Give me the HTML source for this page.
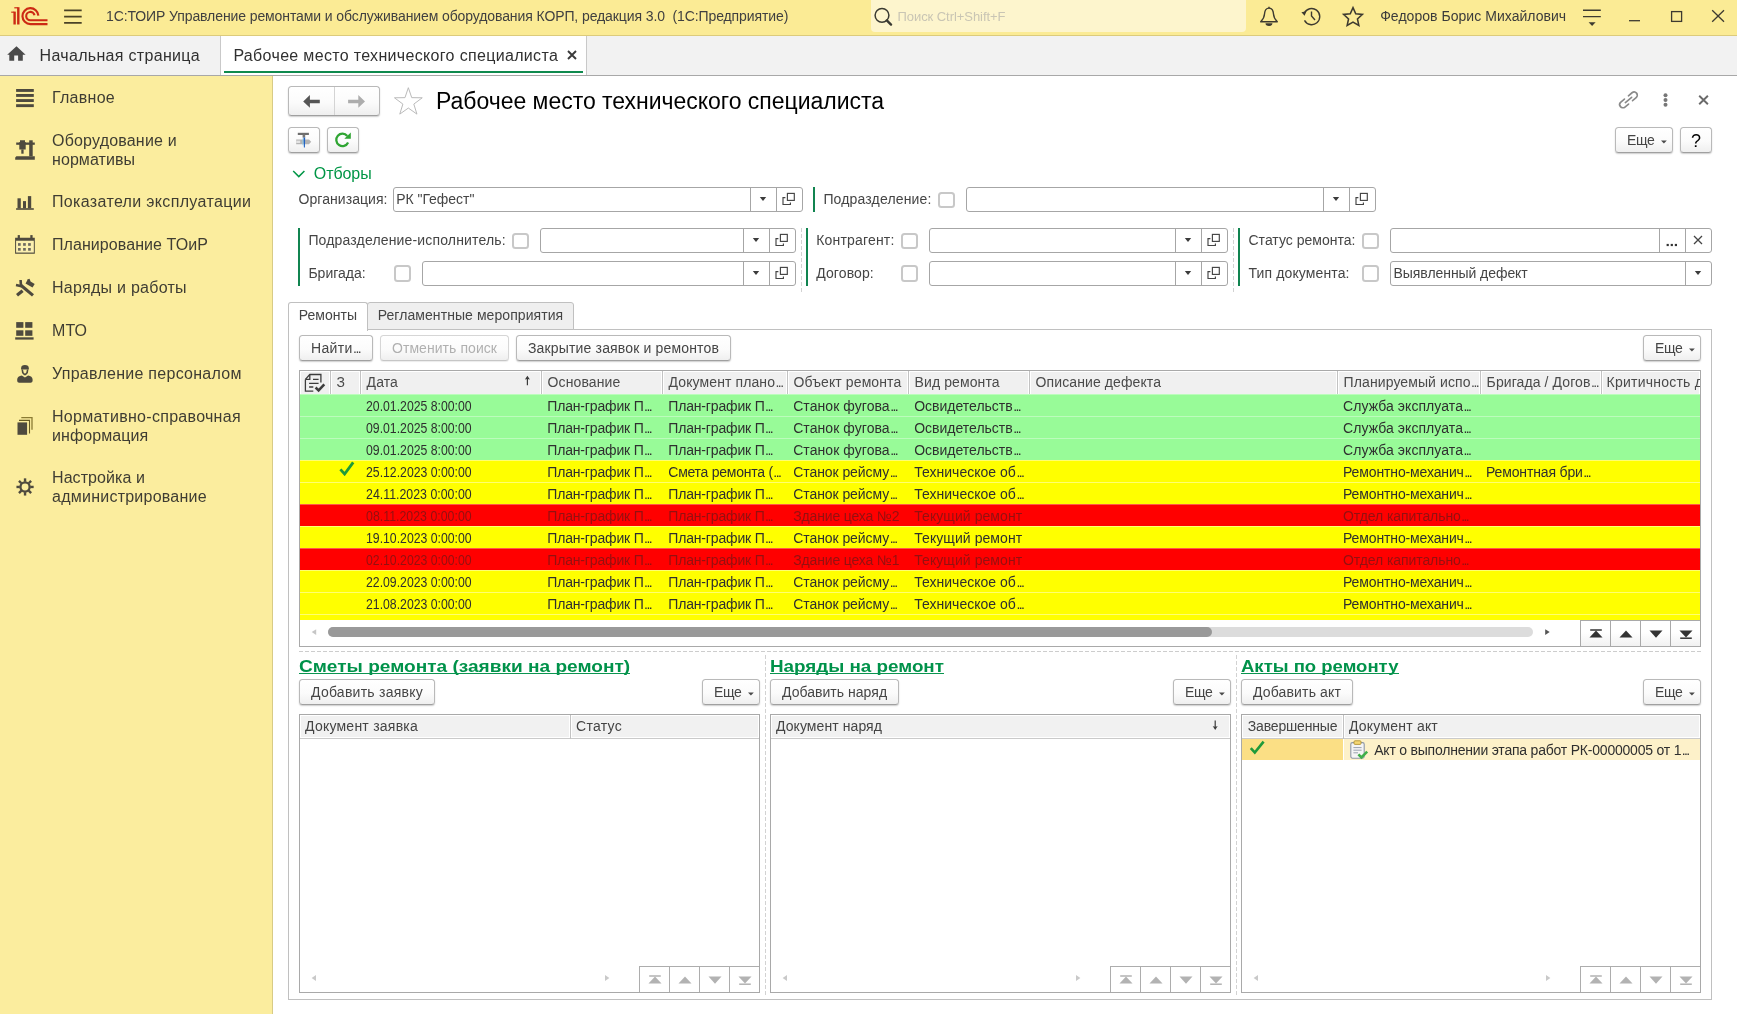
<!DOCTYPE html>
<html lang="ru"><head><meta charset="utf-8"><title>1С:ТОИР — Рабочее место технического специалиста</title>
<style>
html,body{margin:0;padding:0;background:#fff;}
body{width:1737px;height:1014px;overflow:hidden;font-family:"Liberation Sans",sans-serif;font-size:14px;color:#333;}
#app{will-change:transform;position:relative;width:1737px;height:1014px;overflow:hidden;background:#fff;}
#app div,#app span.t,#app svg{position:absolute;box-sizing:border-box;}
.t{white-space:nowrap;color:#454545;}
.el{letter-spacing:-1.6px;margin-left:0.5px;}
.btn{border:1px solid #b9b9b9;border-bottom-color:#a0a0a0;border-radius:3.5px;background:linear-gradient(#ffffff 0%,#fbfbfb 55%,#efefef 100%);box-shadow:0 1px 1.5px rgba(0,0,0,.2);}
.btn.dis{border-color:#d6d6d6;border-bottom-color:#c6c6c6;box-shadow:0 1px 1px rgba(0,0,0,.08);}
.inp{border:1px solid #a6a6a6;border-radius:3px;background:#fff;}
.sep{background:#a6a6a6;width:1px;}
.cb{border:2px solid #c8c8c8;border-radius:3.5px;background:#fff;}
.gbar{background:#118450;width:2px;}
.th{background:#f2f2f2;}
.grid{border:1px solid #a9a9a9;background:#fff;}

</style></head>
<body>
<div id="app">
<!-- top bar -->
<div style="left:0px;top:0px;width:1737px;height:36px;background:#fbeb95;border-bottom:1px solid #dccb7c;"></div>
<svg style="left:8px;top:4px;" width="80" height="26" viewBox="8 4 80 26"><g fill="#cc2a14"><rect x="13.4" y="11.6" width="2.4" height="12.9"/><rect x="11.2" y="11.6" width="3" height="1.15"/><rect x="17.1" y="7.2" width="2.4" height="17.3"/><rect x="14.3" y="7.2" width="3.5" height="1.2"/></g>
<g fill="none" stroke="#cc2a14"><path d="M38.35 15.6A7.95 7.95 0 1 0 30.4 24.05H47.5" stroke-width="2.2"/><path d="M34.5 15.2A4.2 4.2 0 1 0 30.4 20.3H47.5" stroke-width="2.1"/></g>
<g stroke="#4a4226" stroke-width="1.6"><path d="M64.1 10.4H81.7M64.1 16.6H81.7M64.1 22.9H81.7"/></g></svg>
<span class="t" style="left:106.0px;top:7.3px;font-size:14px;line-height:18px;letter-spacing:-0.10px;color:#404040;white-space:pre;">1С:ТОИР Управление ремонтами и обслуживанием оборудования КОРП, редакция 3.0  (1С:Предприятие)</span>
<div style="left:871px;top:0px;width:375px;height:32px;background:#fdf5cd;border-radius:0 0 4px 4px;"></div>
<svg style="left:873px;top:6px;" width="20" height="20" viewBox="0 0 20 20"><circle cx="9" cy="9.3" r="6.9" fill="none" stroke="#3a3a32" stroke-width="1.5"/><path d="M13.8 14.4L18 18.6" stroke="#3a3a32" stroke-width="2.4" stroke-linecap="round"/></svg>
<span class="t" style="left:897.5px;top:7.5px;font-size:13px;line-height:17px;letter-spacing:-0.06px;color:#c9c5b4;">Поиск Ctrl+Shift+F</span>
<svg style="left:1257px;top:4px;" width="24" height="26" viewBox="1257 4 24 26"><path d="M1269 8.1C1265.7 8.1 1264.7 11 1264.5 14C1264.3 17.4 1263.2 19.4 1260.7 21.7H1277.3C1274.8 19.4 1273.7 17.4 1273.5 14C1273.3 11 1272.3 8.1 1269 8.1z" fill="none" stroke="#3d3a30" stroke-width="1.4" stroke-linejoin="round"/><path d="M1269 6.8V8.4" stroke="#3d3a30" stroke-width="1.4"/><path d="M1265.5 23.3H1272.5A3.5 2.7 0 0 1 1265.5 23.3z" fill="#3d3a30"/></svg>
<svg style="left:1299px;top:4px;" width="26" height="26" viewBox="1299 4 26 26"><path d="M1304.3 13.2A8.1 8.1 0 1 1 1304.5 20.4" fill="none" stroke="#3d3a30" stroke-width="1.4"/><path d="M1301.4 12.2L1306.5 11.2L1304.6 15.8z" fill="#3d3a30"/><path d="M1311.5 11.6V16L1315 20" fill="none" stroke="#3d3a30" stroke-width="1.4"/></svg>
<svg style="left:1341px;top:5px;" width="24" height="24" viewBox="0 0 24 24"><path d="M12 2.6l2.75 6.1 6.65.7-4.95 4.5 1.4 6.55L12 17.1l-5.85 3.35 1.4-6.55L2.6 9.4l6.65-.7z" fill="none" stroke="#3d3a30" stroke-width="1.55" stroke-linejoin="miter"/></svg>
<span class="t" style="left:1380.2px;top:6.9px;font-size:14px;line-height:18px;letter-spacing:0.04px;color:#3b3b3b;">Федоров Борис Михайлович</span>
<svg style="left:1580px;top:6px;" width="24" height="22" viewBox="1580 6 24 22"><g stroke="#3d3a30" stroke-width="1.4"><path d="M1583 10.25H1600.8M1583 16.6H1600.8"/></g><path d="M1588.6 22.3H1595.6L1592.1 25.9z" fill="#3d3a30"/></svg>
<svg style="left:1626px;top:8px;" width="18" height="18" viewBox="1626 8 18 18"><path d="M1629 20.7H1640" stroke="#3d3a30" stroke-width="1.3"/></svg>
<svg style="left:1668px;top:8px;" width="18" height="18" viewBox="1668 8 18 18"><rect x="1671.6" y="11.6" width="10" height="9.8" fill="none" stroke="#3d3a30" stroke-width="1.3"/></svg>
<svg style="left:1709px;top:7px;" width="18" height="18" viewBox="1709 7 18 18"><path d="M1712.2 10.2L1724 21.8M1724 10.2L1712.2 21.8" stroke="#3d3a30" stroke-width="1.3"/></svg>
<!-- tab bar -->
<div style="left:0px;top:36px;width:1737px;height:40px;background:#f2f2f2;border-bottom:1px solid #a8a8a8;"></div>
<svg style="left:5px;top:44px;" width="24" height="20" viewBox="5 44 24 20"><path d="M16.5 46.2L25.6 54.8H22.8V60.8H18.1V55.4H14.2V60.8H9.3V54.8H7.2z" fill="#4a4a4a"/></svg>
<span class="t" style="left:39.6px;top:44.8px;font-size:16px;line-height:21px;letter-spacing:0.31px;color:#303030;">Начальная страница</span>
<div style="left:220px;top:36px;width:367px;height:39px;background:#fff;border-left:1px solid #c9c9c9;border-right:1px solid #c9c9c9;"></div>
<span class="t" style="left:233.4px;top:44.8px;font-size:16px;line-height:21px;letter-spacing:0.33px;color:#303030;">Рабочее место технического специалиста</span>
<div style="left:224px;top:71px;width:359px;height:2px;background:#0f8a4e;"></div>
<svg style="left:566px;top:49px;" width="12" height="12" viewBox="0 0 12 12"><path d="M2 2L10 10M10 2L2 10" stroke="#3a3a3a" stroke-width="1.9"/></svg>
<!-- sidebar -->
<div style="left:0px;top:76px;width:273px;height:938px;background:#fbed9e;border-right:1px solid #d8cb86;"></div>
<span class="t" style="left:52.0px;top:87.0px;font-size:16px;line-height:21px;letter-spacing:0.26px;color:#3f3d33;">Главное</span>
<span class="t" style="left:52.0px;top:130.2px;font-size:16px;line-height:21px;letter-spacing:0.19px;color:#3f3d33;">Оборудование и</span>
<span class="t" style="left:52.0px;top:149.2px;font-size:16px;line-height:21px;letter-spacing:0.08px;color:#3f3d33;">нормативы</span>
<span class="t" style="left:52.0px;top:191.1px;font-size:16px;line-height:21px;letter-spacing:0.34px;color:#3f3d33;">Показатели эксплуатации</span>
<span class="t" style="left:52.0px;top:233.9px;font-size:16px;line-height:21px;letter-spacing:0.07px;color:#3f3d33;">Планирование ТОиР</span>
<span class="t" style="left:52.0px;top:277.0px;font-size:16px;line-height:21px;letter-spacing:0.27px;color:#3f3d33;">Наряды и работы</span>
<span class="t" style="left:52.0px;top:319.9px;font-size:16px;line-height:21px;letter-spacing:0.08px;color:#3f3d33;">МТО</span>
<span class="t" style="left:52.0px;top:362.9px;font-size:16px;line-height:21px;letter-spacing:0.27px;color:#3f3d33;">Управление персоналом</span>
<span class="t" style="left:52.0px;top:405.8px;font-size:16px;line-height:21px;letter-spacing:0.29px;color:#3f3d33;">Нормативно-справочная</span>
<span class="t" style="left:52.0px;top:424.8px;font-size:16px;line-height:21px;letter-spacing:0.08px;color:#3f3d33;">информация</span>
<span class="t" style="left:52.0px;top:466.8px;font-size:16px;line-height:21px;letter-spacing:0.08px;color:#3f3d33;">Настройка и</span>
<span class="t" style="left:52.0px;top:485.8px;font-size:16px;line-height:21px;letter-spacing:0.24px;color:#3f3d33;">администрирование</span>
<svg style="left:10px;top:80px;" width="30" height="424" viewBox="10 80 30 424"><g fill="#4e4a3e"><rect x="16.1" y="89" width="17.7" height="2.9"/><rect x="16.1" y="94" width="17.7" height="2.9"/><rect x="16.1" y="99.1" width="17.7" height="2.9"/><rect x="16.1" y="104.2" width="17.7" height="2.9"/></g><g fill="#4e4a3e"><path d="M16.4 156.2H34.8V159.8H15.2V157.4z"/><rect x="29.2" y="140.3" width="3.5" height="16"/><rect x="16.2" y="142.5" width="18.6" height="2.3"/><path d="M20 140.3H25V142H25.7V149.6H19.3V142H20z"/><rect x="21.3" y="149.4" width="2.3" height="4.3"/></g><g fill="#4e4a3e"><rect x="16.1" y="208.2" width="17.7" height="1.6"/><rect x="17.5" y="198.3" width="3.3" height="10"/><rect x="23" y="201.1" width="3" height="7.2"/><rect x="27.9" y="196.1" width="3.3" height="12.2"/></g><g fill="#4e4a3e"><path d="M15.1 237.7H34.8V253.8H15.1z M16.1 240.8V252.6H33.8V240.8z" fill-rule="evenodd"/><rect x="17.7" y="235.1" width="2.2" height="3"/><rect x="30.3" y="235.1" width="2.3" height="3"/><rect x="18" y="243.1" width="2.7" height="2.7"/><rect x="18" y="248" width="2.7" height="2.7"/><rect x="23.1" y="243.1" width="2.7" height="2.7"/><rect x="23.1" y="248" width="2.7" height="2.7"/><rect x="28.1" y="243.1" width="2.7" height="2.7"/><rect x="28.1" y="248" width="2.7" height="2.7"/></g><rect x="16.1" y="240.8" width="17.7" height="11.8" fill="#fff" opacity=".18"/><g fill="none" stroke="#4e4a3e"><path d="M33 295.4L20.6 285" stroke-width="3.1"/><path d="M21.6 286.2L16 285" stroke-width="2.6"/><path d="M21 286L20.6 280" stroke-width="2.6"/><path d="M17 295.2L22.6 290.8" stroke-width="3.3"/><path d="M26.6 281.6L33.6 285.8" stroke-width="4.2"/><path d="M28.4 279.2L29.4 282" stroke-width="2.4"/></g><g fill="#4e4a3e"><rect x="16.2" y="322.1" width="7.2" height="5.7"/><rect x="25.2" y="322.1" width="7.2" height="5.7"/><rect x="16.2" y="330.3" width="7.2" height="5.5"/><rect x="25.2" y="330.3" width="7.2" height="5.5"/><rect x="15.2" y="337.3" width="18.4" height="2.3"/></g><g fill="#4e4a3e"><path d="M21.1 368.2a3.85 3.2 0 0 1 7.7 0v1.4h-7.7z"/><path d="M21.5 369.4h1.5l.6 3.2 1.35 1.2 1.35-1.2.6-3.2h1.5l-.5 3.6-2.1 2.2h-1.7l-2.1-2.2z"/><path d="M17.2 379.4c0-2.2 2-3.6 4.6-4l3.15 2.1 3.15-2.1c2.6.4 4.5 1.8 4.5 4v1.4c0 1.2-.9 2-2 2H19.2c-1.1 0-2-.8-2-2z"/></g><rect x="17.5" y="422.4" width="9.6" height="12.4" fill="#4e4a3e"/><path d="M19 420.4H29.5V433.5" fill="none" stroke="#665a22" stroke-width="1.1"/><path d="M21.3 417.6H32V429.7" fill="none" stroke="#8a7b33" stroke-width="1.3"/><g fill="none" stroke="#4e4a3e"><circle cx="25.05" cy="486.95" r="4.6" stroke-width="2.3"/><g stroke-width="2.4"><path d="M30.25 486.95L33.65 486.95"/><path d="M28.73 490.63L31.13 493.03"/><path d="M25.05 492.15L25.05 495.55"/><path d="M21.37 490.63L18.97 493.03"/><path d="M19.85 486.95L16.45 486.95"/><path d="M21.37 483.27L18.97 480.87"/><path d="M25.05 481.75L25.05 478.35"/><path d="M28.73 483.27L31.13 480.87"/></g></g></svg>
<!-- form header -->
<div class="btn" style="left:288px;top:86px;width:92px;height:30px;"></div>
<div style="left:334px;top:87px;width:1px;height:28px;background:#d4d4d4;"></div>
<svg style="left:300px;top:93px;" width="24" height="17" viewBox="300 93 24 17"><path d="M303.2 101.4L309.9 95.1V99.7H319.8V103.2H309.9V107.7z" fill="#555"/></svg>
<svg style="left:346px;top:93px;" width="24" height="17" viewBox="346 93 24 17"><path d="M365 101.4L358.3 95.1V99.7H348.1V103.2H358.3V107.7z" fill="#adadad"/></svg>
<svg style="left:392px;top:85px;" width="33" height="32" viewBox="392 85 33 32"><path d="M408.35 87.70L411.73 97.65L422.24 97.79L413.82 104.08L416.93 114.11L408.35 108.05L399.77 114.11L402.88 104.08L394.46 97.79L404.97 97.65z" fill="#fff" stroke="#b6b6b6" stroke-width="0.95" stroke-linejoin="miter"/></svg>
<span class="t" style="left:436.0px;top:85.9px;font-size:23px;line-height:30px;letter-spacing:-0.02px;color:#000;">Рабочее место технического специалиста</span>
<svg style="left:1616px;top:88px;" width="26" height="24" viewBox="1616 88 26 24"><g transform="translate(1628.5 99.9) rotate(-40)" fill="none" stroke="#8a8a8a" stroke-width="1.65" stroke-linecap="round"><path d="M-2.6 -3.2H-7.3A3.2 3.2 0 0 0 -7.3 3.2H-2.6"/><path d="M2.6 -3.2H7.3A3.2 3.2 0 0 1 7.3 3.2H2.6"/><path d="M-4.1 0H4.1"/></g></svg>
<svg style="left:1661px;top:91px;" width="10" height="18" viewBox="1661 91 10 18"><g fill="#777"><circle cx="1665.5" cy="95.2" r="2"/><circle cx="1665.5" cy="100" r="2"/><circle cx="1665.5" cy="104.8" r="2"/></g></svg>
<svg style="left:1696px;top:93px;" width="15" height="14" viewBox="1696 93 15 14"><path d="M1699.2 95.7L1707.9 104.2M1707.9 95.7L1699.2 104.2" stroke="#6a6a6a" stroke-width="1.9"/></svg>
<div class="btn" style="left:288px;top:127px;width:32px;height:26px;"></div>
<svg style="left:294px;top:130px;" width="20" height="20" viewBox="294 130 20 20"><rect x="297.8" y="132.8" width="11.1" height="2.2" fill="#6e6e6e"/><rect x="302.6" y="134.6" width="2.6" height="3" fill="#777"/><path d="M296.2 139.4H309L311.2 141.8L309 144.2H296.2z" fill="#b4b4b4"/><rect x="296.2" y="140.6" width="4" height="2.4" fill="#e4e4e4"/><path d="M303.4 137.4L305.2 137.4L304.9 147.6L303.9 147.6z" fill="#1f62c4"/><rect x="302.4" y="138.4" width="1" height="6.8" fill="#8fd0f0" opacity=".8"/></svg>
<div class="btn" style="left:327px;top:127px;width:32px;height:26px;"></div>
<svg style="left:333px;top:130px;" width="20" height="20" viewBox="333 130 20 20"><path d="M347.25 135.9A6.2 6.2 0 1 0 348.1 142.5" fill="none" stroke="#2fa533" stroke-width="2.3"/><path d="M350.8 132.5V138.8H344.3z" fill="#2fa533"/></svg>
<div class="btn" style="left:1615px;top:127px;width:58px;height:26px;"></div>
<span class="t" style="left:1627.1px;top:131.2px;font-size:14px;line-height:18px;letter-spacing:-0.39px;">Еще</span>
<svg style="left:1659px;top:139px;" width="10" height="6" viewBox="1659 139 10 6"><path d="M1661.0 140.6H1666.8L1663.9 143.4z" fill="#4a4a4a"/></svg>
<div class="btn" style="left:1680px;top:127px;width:32px;height:26px;"></div>
<span class="t" style="left:1691.0px;top:130.1px;font-size:18px;line-height:23px;color:#000;">?</span>
<svg style="left:291px;top:168px;" width="16" height="12" viewBox="0 0 16 12"><path d="M2.2 3L7.8 8.6L13.4 3" fill="none" stroke="#009646" stroke-width="1.5"/></svg>
<span class="t" style="left:313.8px;top:162.7px;font-size:16px;line-height:21px;letter-spacing:-0.08px;color:#009646;">Отборы</span>
<!-- filters -->
<span class="t" style="left:298.5px;top:189.9px;font-size:14px;line-height:18px;letter-spacing:0.06px;">Организация:</span>
<div class="inp" style="left:393px;top:187px;width:410px;height:24.5px;"></div>
<div class="sep" style="left:750px;top:188px;width:1px;height:22.5px;"></div>
<div class="sep" style="left:776px;top:188px;width:1px;height:22.5px;"></div>
<svg style="left:758px;top:196px;" width="10" height="7" viewBox="0 0 10 7"><path d="M1.8 1.1H8.2L5 4.9z" fill="#3c3c3c"/></svg>
<svg style="left:782px;top:191px;" width="14" height="14" viewBox="0 0 14 14"><g fill="none" stroke="#444" stroke-width="1.15"><rect x="5.4" y="2.4" width="6.9" height="7"/><path d="M3.4 6.6H1V13.5H8.4V11.4"/></g></svg>
<span class="t" style="left:396.3px;top:189.9px;font-size:14px;line-height:18px;letter-spacing:-0.04px;">РК "Гефест"</span>
<div class="gbar" style="left:813px;top:187px;width:2px;height:24.5px;"></div>
<span class="t" style="left:823.4px;top:189.9px;font-size:14px;line-height:18px;letter-spacing:0.16px;">Подразделение:</span>
<div class="cb" style="left:938px;top:191.5px;width:16.5px;height:16.5px;"></div>
<div class="inp" style="left:966px;top:187px;width:409.5px;height:24.5px;"></div>
<div class="sep" style="left:1323px;top:188px;width:1px;height:22.5px;"></div>
<div class="sep" style="left:1349px;top:188px;width:1px;height:22.5px;"></div>
<svg style="left:1331px;top:196px;" width="10" height="7" viewBox="0 0 10 7"><path d="M1.8 1.1H8.2L5 4.9z" fill="#3c3c3c"/></svg>
<svg style="left:1355px;top:191px;" width="14" height="14" viewBox="0 0 14 14"><g fill="none" stroke="#444" stroke-width="1.15"><rect x="5.4" y="2.4" width="6.9" height="7"/><path d="M3.4 6.6H1V13.5H8.4V11.4"/></g></svg>
<div class="gbar" style="left:298px;top:228px;width:2px;height:58px;"></div>
<span class="t" style="left:308.4px;top:231.1px;font-size:14px;line-height:18px;letter-spacing:0.16px;">Подразделение-исполнитель:</span>
<div class="cb" style="left:512px;top:232.5px;width:16.5px;height:16.5px;"></div>
<div class="inp" style="left:540px;top:228px;width:255.5px;height:24.5px;"></div>
<div class="sep" style="left:743px;top:229px;width:1px;height:22.5px;"></div>
<div class="sep" style="left:769px;top:229px;width:1px;height:22.5px;"></div>
<svg style="left:751px;top:237px;" width="10" height="7" viewBox="0 0 10 7"><path d="M1.8 1.1H8.2L5 4.9z" fill="#3c3c3c"/></svg>
<svg style="left:775px;top:232px;" width="14" height="14" viewBox="0 0 14 14"><g fill="none" stroke="#444" stroke-width="1.15"><rect x="5.4" y="2.4" width="6.9" height="7"/><path d="M3.4 6.6H1V13.5H8.4V11.4"/></g></svg>
<span class="t" style="left:308.4px;top:263.9px;font-size:14px;line-height:18px;letter-spacing:0.02px;">Бригада:</span>
<div class="cb" style="left:394px;top:265px;width:16.5px;height:16.5px;"></div>
<div class="inp" style="left:422px;top:261px;width:373.5px;height:24.5px;"></div>
<div class="sep" style="left:743px;top:262px;width:1px;height:22.5px;"></div>
<div class="sep" style="left:769px;top:262px;width:1px;height:22.5px;"></div>
<svg style="left:751px;top:270px;" width="10" height="7" viewBox="0 0 10 7"><path d="M1.8 1.1H8.2L5 4.9z" fill="#3c3c3c"/></svg>
<svg style="left:775px;top:265px;" width="14" height="14" viewBox="0 0 14 14"><g fill="none" stroke="#444" stroke-width="1.15"><rect x="5.4" y="2.4" width="6.9" height="7"/><path d="M3.4 6.6H1V13.5H8.4V11.4"/></g></svg>
<div style="left:801px;top:228px;width:1px;height:64px;background:repeating-linear-gradient(180deg,#d2d2d2 0 4px,transparent 4px 6px);"></div>
<div style="left:1233px;top:228px;width:1px;height:64px;background:repeating-linear-gradient(180deg,#d2d2d2 0 4px,transparent 4px 6px);"></div>
<div class="gbar" style="left:806px;top:228px;width:2px;height:58px;"></div>
<span class="t" style="left:816.2px;top:231.1px;font-size:14px;line-height:18px;letter-spacing:0.19px;">Контрагент:</span>
<div class="cb" style="left:901px;top:232.5px;width:16.5px;height:16.5px;"></div>
<div class="inp" style="left:929px;top:228px;width:298.5px;height:24.5px;"></div>
<div class="sep" style="left:1175px;top:229px;width:1px;height:22.5px;"></div>
<div class="sep" style="left:1201px;top:229px;width:1px;height:22.5px;"></div>
<svg style="left:1183px;top:237px;" width="10" height="7" viewBox="0 0 10 7"><path d="M1.8 1.1H8.2L5 4.9z" fill="#3c3c3c"/></svg>
<svg style="left:1207px;top:232px;" width="14" height="14" viewBox="0 0 14 14"><g fill="none" stroke="#444" stroke-width="1.15"><rect x="5.4" y="2.4" width="6.9" height="7"/><path d="M3.4 6.6H1V13.5H8.4V11.4"/></g></svg>
<span class="t" style="left:816.2px;top:263.9px;font-size:14px;line-height:18px;letter-spacing:0.11px;">Договор:</span>
<div class="cb" style="left:901px;top:265px;width:16.5px;height:16.5px;"></div>
<div class="inp" style="left:929px;top:261px;width:298.5px;height:24.5px;"></div>
<div class="sep" style="left:1175px;top:262px;width:1px;height:22.5px;"></div>
<div class="sep" style="left:1201px;top:262px;width:1px;height:22.5px;"></div>
<svg style="left:1183px;top:270px;" width="10" height="7" viewBox="0 0 10 7"><path d="M1.8 1.1H8.2L5 4.9z" fill="#3c3c3c"/></svg>
<svg style="left:1207px;top:265px;" width="14" height="14" viewBox="0 0 14 14"><g fill="none" stroke="#444" stroke-width="1.15"><rect x="5.4" y="2.4" width="6.9" height="7"/><path d="M3.4 6.6H1V13.5H8.4V11.4"/></g></svg>
<div class="gbar" style="left:1238px;top:228px;width:2px;height:58px;"></div>
<span class="t" style="left:1248.5px;top:231.1px;font-size:14px;line-height:18px;letter-spacing:0.01px;">Статус ремонта:</span>
<div class="cb" style="left:1362px;top:232.5px;width:16.5px;height:16.5px;"></div>
<div class="inp" style="left:1390px;top:228px;width:321.5px;height:24.5px;"></div>
<div class="sep" style="left:1659px;top:229px;width:1px;height:22.5px;"></div>
<div class="sep" style="left:1685px;top:229px;width:1px;height:22.5px;"></div>
<svg style="left:1666px;top:243px;" width="12" height="4" viewBox="0 0 12 4"><g fill="#333"><rect x="0.6" y="0.9" width="2.2" height="2.2"/><rect x="4.7" y="0.9" width="2.2" height="2.2"/><rect x="8.8" y="0.9" width="2.2" height="2.2"/></g></svg>
<svg style="left:1692px;top:234px;" width="12" height="12" viewBox="0 0 12 12"><path d="M2 2L10 10M10 2L2 10" stroke="#444" stroke-width="1.3"/></svg>
<span class="t" style="left:1248.5px;top:263.9px;font-size:14px;line-height:18px;letter-spacing:0.12px;">Тип документа:</span>
<div class="cb" style="left:1362px;top:265px;width:16.5px;height:16.5px;"></div>
<div class="inp" style="left:1390px;top:261px;width:321.5px;height:24.5px;"></div>
<div class="sep" style="left:1685px;top:262px;width:1px;height:22.5px;"></div>
<svg style="left:1693px;top:270px;" width="10" height="7" viewBox="0 0 10 7"><path d="M1.8 1.1H8.2L5 4.9z" fill="#3c3c3c"/></svg>
<span class="t" style="left:1393.6px;top:263.9px;font-size:14px;line-height:18px;letter-spacing:-0.07px;">Выявленный дефект</span>
<!-- pages -->
<div style="left:288px;top:329px;width:1424px;height:671px;border:1px solid #c0c0c0;background:#fff;"></div>
<div style="left:367px;top:302px;width:207px;height:28px;background:#efefef;border:1px solid #c0c0c0;border-radius:3px 3px 0 0;"></div>
<span class="t" style="left:377.7px;top:305.9px;font-size:14px;line-height:18px;letter-spacing:0.07px;">Регламентные мероприятия</span>
<div style="left:288px;top:302px;width:80px;height:29px;background:#fff;border:1px solid #c0c0c0;border-bottom:none;border-radius:3px 3px 0 0;"></div>
<span class="t" style="left:298.8px;top:305.9px;font-size:14px;line-height:18px;letter-spacing:0.01px;">Ремонты</span>
<div class="btn" style="left:299px;top:335px;width:74px;height:26px;"></div>
<span class="t" style="left:311.0px;top:338.5px;font-size:14px;line-height:18px;letter-spacing:0.33px;">Найти<span class="el">...</span></span>
<div class="btn dis" style="left:380px;top:335px;width:129px;height:26px;"></div>
<span class="t" style="left:392.0px;top:338.5px;font-size:14px;line-height:18px;letter-spacing:0.06px;color:#b0b0b0;">Отменить поиск</span>
<div class="btn" style="left:516px;top:335px;width:215px;height:26px;"></div>
<span class="t" style="left:528.0px;top:338.5px;font-size:14px;line-height:18px;letter-spacing:0.16px;">Закрытие заявок и ремонтов</span>
<div class="btn" style="left:1643px;top:335px;width:58px;height:26px;"></div>
<span class="t" style="left:1655.1px;top:339.2px;font-size:14px;line-height:18px;letter-spacing:-0.39px;">Еще</span>
<svg style="left:1687px;top:347px;" width="10" height="6" viewBox="1687 347 10 6"><path d="M1689.0 348.6H1694.8L1691.9 351.4z" fill="#4a4a4a"/></svg>
<!-- main grid -->
<div class="grid" style="left:299px;top:370px;width:1402px;height:276.5px;"></div>
<div style="left:300px;top:371px;width:1400px;height:23.5px;background:#f0f0f0;box-shadow:inset 0 0 0 1px #fff;"></div>
<div style="left:329px;top:371px;width:3px;height:23.5px;background:#fff;"></div>
<div style="left:330px;top:371px;width:1px;height:23.5px;background:#c2c2c2;"></div>
<div style="left:359px;top:371px;width:3px;height:23.5px;background:#fff;"></div>
<div style="left:360px;top:371px;width:1px;height:23.5px;background:#c2c2c2;"></div>
<div style="left:540px;top:371px;width:3px;height:23.5px;background:#fff;"></div>
<div style="left:541px;top:371px;width:1px;height:23.5px;background:#c2c2c2;"></div>
<div style="left:661px;top:371px;width:3px;height:23.5px;background:#fff;"></div>
<div style="left:662px;top:371px;width:1px;height:23.5px;background:#c2c2c2;"></div>
<div style="left:786px;top:371px;width:3px;height:23.5px;background:#fff;"></div>
<div style="left:787px;top:371px;width:1px;height:23.5px;background:#c2c2c2;"></div>
<div style="left:907px;top:371px;width:3px;height:23.5px;background:#fff;"></div>
<div style="left:908px;top:371px;width:1px;height:23.5px;background:#c2c2c2;"></div>
<div style="left:1028px;top:371px;width:3px;height:23.5px;background:#fff;"></div>
<div style="left:1029px;top:371px;width:1px;height:23.5px;background:#c2c2c2;"></div>
<div style="left:1336px;top:371px;width:3px;height:23.5px;background:#fff;"></div>
<div style="left:1337px;top:371px;width:1px;height:23.5px;background:#c2c2c2;"></div>
<div style="left:1479px;top:371px;width:3px;height:23.5px;background:#fff;"></div>
<div style="left:1480px;top:371px;width:1px;height:23.5px;background:#c2c2c2;"></div>
<div style="left:1600px;top:371px;width:3px;height:23.5px;background:#fff;"></div>
<div style="left:1601px;top:371px;width:1px;height:23.5px;background:#c2c2c2;"></div>
<span class="t" style="left:336.6px;top:373.1px;font-size:14px;line-height:18px;letter-spacing:0.10px;color:#4a4a4a;">З</span>
<span class="t" style="left:366.6px;top:373.1px;font-size:14px;line-height:18px;letter-spacing:0.10px;color:#4a4a4a;">Дата</span>
<span class="t" style="left:547.6px;top:373.1px;font-size:14px;line-height:18px;letter-spacing:0.10px;color:#4a4a4a;">Основание</span>
<span class="t" style="left:668.6px;top:373.1px;font-size:14px;line-height:18px;letter-spacing:0.10px;color:#4a4a4a;">Документ плано<span class="el">...</span></span>
<span class="t" style="left:793.6px;top:373.1px;font-size:14px;line-height:18px;letter-spacing:0.10px;color:#4a4a4a;">Объект ремонта</span>
<span class="t" style="left:914.6px;top:373.1px;font-size:14px;line-height:18px;letter-spacing:0.10px;color:#4a4a4a;">Вид ремонта</span>
<span class="t" style="left:1035.6px;top:373.1px;font-size:14px;line-height:18px;letter-spacing:0.10px;color:#4a4a4a;">Описание дефекта</span>
<span class="t" style="left:1343.6px;top:373.1px;font-size:14px;line-height:18px;letter-spacing:0.10px;color:#4a4a4a;">Планируемый испо<span class="el">...</span></span>
<span class="t" style="left:1486.6px;top:373.1px;font-size:14px;line-height:18px;letter-spacing:0.10px;color:#4a4a4a;">Бригада / Догов<span class="el">...</span></span>
<div style="left:1602px;top:371px;width:98px;height:23px;overflow:hidden;">
<span class="t" style="left:4.6px;top:2.1px;font-size:14px;line-height:18px;letter-spacing:0.22px;color:#4a4a4a;">Критичность д</span>
</div>
<svg style="left:303px;top:372px;" width="24" height="21" viewBox="303 372 24 21"><g fill="none" stroke="#3c3c3c" stroke-width="1.3"><path d="M305.4 379.4L309.8 374.5H320.9V382.6"/><path d="M305.4 379.4V391.1H313.3"/><path d="M309.8 374.5V379.4H305.4"/><path d="M313 379.4H318.6M309.1 383.3H318.6M309.1 387H313.3"/></g><path d="M315.6 387.5L318.6 390.4L324.3 384.4" fill="none" stroke="#3c3c3c" stroke-width="2.5"/></svg>
<svg style="left:522px;top:374px;" width="11" height="13" viewBox="522 374 11 13"><path d="M527.4 385.2V377.6" stroke="#3a3a3a" stroke-width="1.2"/><path d="M524.9 379.5L527.4 375.7L529.9 379.5Q527.4 378.3 524.9 379.5z" fill="#3a3a3a"/></svg>
<div style="left:300px;top:394px;width:1400px;height:22px;background:#98fb98;border-top:1px solid #bcfcbc;"></div>
<span class="t" style="left:366.0px;top:396.5px;font-size:14px;line-height:18px;color:#2f2f2f;display:inline-block;transform-origin:0 50%;transform:scaleX(0.8756);">20.01.2025 8:00:00</span>
<span class="t" style="left:547.3px;top:396.5px;font-size:14px;line-height:18px;letter-spacing:-0.17px;color:#2f2f2f;">План-график П<span class="el">...</span></span>
<span class="t" style="left:668.3px;top:396.5px;font-size:14px;line-height:18px;letter-spacing:-0.17px;color:#2f2f2f;">План-график П<span class="el">...</span></span>
<span class="t" style="left:793.2px;top:396.5px;font-size:14px;line-height:18px;letter-spacing:0.06px;color:#2f2f2f;">Станок фугова<span class="el">...</span></span>
<span class="t" style="left:914.2px;top:396.5px;font-size:14px;line-height:18px;color:#2f2f2f;">Освидетельств<span class="el">...</span></span>
<span class="t" style="left:1343.0px;top:396.5px;font-size:14px;line-height:18px;letter-spacing:0.07px;color:#2f2f2f;">Служба эксплуата<span class="el">...</span></span>
<div style="left:300px;top:416px;width:1400px;height:22px;background:#98fb98;border-top:1px solid #bcfcbc;"></div>
<span class="t" style="left:366.0px;top:418.5px;font-size:14px;line-height:18px;color:#2f2f2f;display:inline-block;transform-origin:0 50%;transform:scaleX(0.8756);">09.01.2025 8:00:00</span>
<span class="t" style="left:547.3px;top:418.5px;font-size:14px;line-height:18px;letter-spacing:-0.17px;color:#2f2f2f;">План-график П<span class="el">...</span></span>
<span class="t" style="left:668.3px;top:418.5px;font-size:14px;line-height:18px;letter-spacing:-0.17px;color:#2f2f2f;">План-график П<span class="el">...</span></span>
<span class="t" style="left:793.2px;top:418.5px;font-size:14px;line-height:18px;letter-spacing:0.06px;color:#2f2f2f;">Станок фугова<span class="el">...</span></span>
<span class="t" style="left:914.2px;top:418.5px;font-size:14px;line-height:18px;color:#2f2f2f;">Освидетельств<span class="el">...</span></span>
<span class="t" style="left:1343.0px;top:418.5px;font-size:14px;line-height:18px;letter-spacing:0.07px;color:#2f2f2f;">Служба эксплуата<span class="el">...</span></span>
<div style="left:300px;top:438px;width:1400px;height:22px;background:#98fb98;border-top:1px solid #bcfcbc;"></div>
<span class="t" style="left:366.0px;top:440.5px;font-size:14px;line-height:18px;color:#2f2f2f;display:inline-block;transform-origin:0 50%;transform:scaleX(0.8756);">09.01.2025 8:00:00</span>
<span class="t" style="left:547.3px;top:440.5px;font-size:14px;line-height:18px;letter-spacing:-0.17px;color:#2f2f2f;">План-график П<span class="el">...</span></span>
<span class="t" style="left:668.3px;top:440.5px;font-size:14px;line-height:18px;letter-spacing:-0.17px;color:#2f2f2f;">План-график П<span class="el">...</span></span>
<span class="t" style="left:793.2px;top:440.5px;font-size:14px;line-height:18px;letter-spacing:0.06px;color:#2f2f2f;">Станок фугова<span class="el">...</span></span>
<span class="t" style="left:914.2px;top:440.5px;font-size:14px;line-height:18px;color:#2f2f2f;">Освидетельств<span class="el">...</span></span>
<span class="t" style="left:1343.0px;top:440.5px;font-size:14px;line-height:18px;letter-spacing:0.07px;color:#2f2f2f;">Служба эксплуата<span class="el">...</span></span>
<div style="left:300px;top:460px;width:1400px;height:22px;background:#ffff00;border-top:1px solid #ffff70;"></div>
<span class="t" style="left:366.0px;top:462.5px;font-size:14px;line-height:18px;color:#2f2f2f;display:inline-block;transform-origin:0 50%;transform:scaleX(0.8756);">25.12.2023 0:00:00</span>
<span class="t" style="left:547.3px;top:462.5px;font-size:14px;line-height:18px;letter-spacing:-0.17px;color:#2f2f2f;">План-график П<span class="el">...</span></span>
<span class="t" style="left:668.3px;top:462.5px;font-size:14px;line-height:18px;letter-spacing:-0.25px;color:#2f2f2f;">Смета ремонта (<span class="el">...</span></span>
<span class="t" style="left:793.2px;top:462.5px;font-size:14px;line-height:18px;letter-spacing:-0.07px;color:#2f2f2f;">Станок рейсму<span class="el">...</span></span>
<span class="t" style="left:914.2px;top:462.5px;font-size:14px;line-height:18px;letter-spacing:0.02px;color:#2f2f2f;">Техническое об<span class="el">...</span></span>
<span class="t" style="left:1343.0px;top:462.5px;font-size:14px;line-height:18px;letter-spacing:-0.13px;color:#2f2f2f;">Ремонтно-механич<span class="el">...</span></span>
<span class="t" style="left:1486.0px;top:462.5px;font-size:14px;line-height:18px;letter-spacing:-0.15px;color:#2f2f2f;">Ремонтная бри<span class="el">...</span></span>
<svg style="left:339px;top:461px;" width="16" height="15" viewBox="0 0 16 15"><path d="M1.4 8.4L5.6 13L14.2 1.4" fill="none" stroke="#1f9a3a" stroke-width="2.8"/></svg>
<div style="left:300px;top:482px;width:1400px;height:22px;background:#ffff00;border-top:1px solid #ffff70;"></div>
<span class="t" style="left:366.0px;top:484.5px;font-size:14px;line-height:18px;color:#2f2f2f;display:inline-block;transform-origin:0 50%;transform:scaleX(0.8831);">24.11.2023 0:00:00</span>
<span class="t" style="left:547.3px;top:484.5px;font-size:14px;line-height:18px;letter-spacing:-0.17px;color:#2f2f2f;">План-график П<span class="el">...</span></span>
<span class="t" style="left:668.3px;top:484.5px;font-size:14px;line-height:18px;letter-spacing:-0.17px;color:#2f2f2f;">План-график П<span class="el">...</span></span>
<span class="t" style="left:793.2px;top:484.5px;font-size:14px;line-height:18px;letter-spacing:-0.07px;color:#2f2f2f;">Станок рейсму<span class="el">...</span></span>
<span class="t" style="left:914.2px;top:484.5px;font-size:14px;line-height:18px;letter-spacing:0.02px;color:#2f2f2f;">Техническое об<span class="el">...</span></span>
<span class="t" style="left:1343.0px;top:484.5px;font-size:14px;line-height:18px;letter-spacing:-0.13px;color:#2f2f2f;">Ремонтно-механич<span class="el">...</span></span>
<div style="left:300px;top:504px;width:1400px;height:22px;background:#ff0000;border-top:1px solid #ff5848;"></div>
<span class="t" style="left:366.0px;top:506.5px;font-size:14px;line-height:18px;color:#941010;display:inline-block;transform-origin:0 50%;transform:scaleX(0.8831);">08.11.2023 0:00:00</span>
<span class="t" style="left:547.3px;top:506.5px;font-size:14px;line-height:18px;letter-spacing:-0.17px;color:#941010;">План-график П<span class="el">...</span></span>
<span class="t" style="left:668.3px;top:506.5px;font-size:14px;line-height:18px;letter-spacing:-0.17px;color:#941010;">План-график П<span class="el">...</span></span>
<span class="t" style="left:793.2px;top:506.5px;font-size:14px;line-height:18px;letter-spacing:-0.15px;color:#941010;">Здание цеха №2</span>
<span class="t" style="left:914.2px;top:506.5px;font-size:14px;line-height:18px;letter-spacing:0.07px;color:#941010;">Текущий ремонт</span>
<span class="t" style="left:1343.0px;top:506.5px;font-size:14px;line-height:18px;letter-spacing:-0.08px;color:#941010;">Отдел капитально<span class="el">...</span></span>
<div style="left:300px;top:526px;width:1400px;height:22px;background:#ffff00;border-top:1px solid #ffff70;"></div>
<span class="t" style="left:366.0px;top:528.5px;font-size:14px;line-height:18px;color:#2f2f2f;display:inline-block;transform-origin:0 50%;transform:scaleX(0.8756);">19.10.2023 0:00:00</span>
<span class="t" style="left:547.3px;top:528.5px;font-size:14px;line-height:18px;letter-spacing:-0.17px;color:#2f2f2f;">План-график П<span class="el">...</span></span>
<span class="t" style="left:668.3px;top:528.5px;font-size:14px;line-height:18px;letter-spacing:-0.17px;color:#2f2f2f;">План-график П<span class="el">...</span></span>
<span class="t" style="left:793.2px;top:528.5px;font-size:14px;line-height:18px;letter-spacing:-0.07px;color:#2f2f2f;">Станок рейсму<span class="el">...</span></span>
<span class="t" style="left:914.2px;top:528.5px;font-size:14px;line-height:18px;letter-spacing:0.07px;color:#2f2f2f;">Текущий ремонт</span>
<span class="t" style="left:1343.0px;top:528.5px;font-size:14px;line-height:18px;letter-spacing:-0.13px;color:#2f2f2f;">Ремонтно-механич<span class="el">...</span></span>
<div style="left:300px;top:548px;width:1400px;height:22px;background:#ff0000;border-top:1px solid #ff5848;"></div>
<span class="t" style="left:366.0px;top:550.5px;font-size:14px;line-height:18px;color:#941010;display:inline-block;transform-origin:0 50%;transform:scaleX(0.8756);">02.10.2023 0:00:00</span>
<span class="t" style="left:547.3px;top:550.5px;font-size:14px;line-height:18px;letter-spacing:-0.17px;color:#941010;">План-график П<span class="el">...</span></span>
<span class="t" style="left:668.3px;top:550.5px;font-size:14px;line-height:18px;letter-spacing:-0.17px;color:#941010;">План-график П<span class="el">...</span></span>
<span class="t" style="left:793.2px;top:550.5px;font-size:14px;line-height:18px;letter-spacing:-0.15px;color:#941010;">Здание цеха №1</span>
<span class="t" style="left:914.2px;top:550.5px;font-size:14px;line-height:18px;letter-spacing:0.07px;color:#941010;">Текущий ремонт</span>
<span class="t" style="left:1343.0px;top:550.5px;font-size:14px;line-height:18px;letter-spacing:-0.08px;color:#941010;">Отдел капитально<span class="el">...</span></span>
<div style="left:300px;top:570px;width:1400px;height:22px;background:#ffff00;border-top:1px solid #ffff70;"></div>
<span class="t" style="left:366.0px;top:572.5px;font-size:14px;line-height:18px;color:#2f2f2f;display:inline-block;transform-origin:0 50%;transform:scaleX(0.8756);">22.09.2023 0:00:00</span>
<span class="t" style="left:547.3px;top:572.5px;font-size:14px;line-height:18px;letter-spacing:-0.17px;color:#2f2f2f;">План-график П<span class="el">...</span></span>
<span class="t" style="left:668.3px;top:572.5px;font-size:14px;line-height:18px;letter-spacing:-0.17px;color:#2f2f2f;">План-график П<span class="el">...</span></span>
<span class="t" style="left:793.2px;top:572.5px;font-size:14px;line-height:18px;letter-spacing:-0.07px;color:#2f2f2f;">Станок рейсму<span class="el">...</span></span>
<span class="t" style="left:914.2px;top:572.5px;font-size:14px;line-height:18px;letter-spacing:0.02px;color:#2f2f2f;">Техническое об<span class="el">...</span></span>
<span class="t" style="left:1343.0px;top:572.5px;font-size:14px;line-height:18px;letter-spacing:-0.13px;color:#2f2f2f;">Ремонтно-механич<span class="el">...</span></span>
<div style="left:300px;top:592px;width:1400px;height:22px;background:#ffff00;border-top:1px solid #ffff70;"></div>
<span class="t" style="left:366.0px;top:594.5px;font-size:14px;line-height:18px;color:#2f2f2f;display:inline-block;transform-origin:0 50%;transform:scaleX(0.8756);">21.08.2023 0:00:00</span>
<span class="t" style="left:547.3px;top:594.5px;font-size:14px;line-height:18px;letter-spacing:-0.17px;color:#2f2f2f;">План-график П<span class="el">...</span></span>
<span class="t" style="left:668.3px;top:594.5px;font-size:14px;line-height:18px;letter-spacing:-0.17px;color:#2f2f2f;">План-график П<span class="el">...</span></span>
<span class="t" style="left:793.2px;top:594.5px;font-size:14px;line-height:18px;letter-spacing:-0.07px;color:#2f2f2f;">Станок рейсму<span class="el">...</span></span>
<span class="t" style="left:914.2px;top:594.5px;font-size:14px;line-height:18px;letter-spacing:0.02px;color:#2f2f2f;">Техническое об<span class="el">...</span></span>
<span class="t" style="left:1343.0px;top:594.5px;font-size:14px;line-height:18px;letter-spacing:-0.13px;color:#2f2f2f;">Ремонтно-механич<span class="el">...</span></span>
<div style="left:300px;top:616px;width:1400px;height:4px;background:#ffff00;"></div>
<div style="left:300px;top:614px;width:1400px;height:2px;background:#ffff00;border-top:1px solid #ffff70;"></div>
<svg style="left:309px;top:626px;" width="10" height="12" viewBox="0 0 10 12"><path d="M7.2 3.2V8.9L2.7 6.05z" fill="#c6c6c6"/></svg>
<svg style="left:1542px;top:626px;" width="10" height="12" viewBox="0 0 10 12"><path d="M3.2 3.2V8.9L7.7 6.05z" fill="#555"/></svg>
<div style="left:328px;top:627px;width:1205px;height:10px;background:#dcdcdc;border-radius:5px;"></div>
<div style="left:328px;top:627px;width:884px;height:10px;background:#999;border-radius:5px;"></div>
<div style="left:1580px;top:620px;width:120px;height:26px;border-left:1px solid #a9a9a9;border-top:1px solid #a9a9a9;background:linear-gradient(#fff 45%,#f1f1f1);"></div>
<div style="left:1610px;top:620px;width:1px;height:26px;background:#a9a9a9;"></div>
<div style="left:1640px;top:620px;width:1px;height:26px;background:#a9a9a9;"></div>
<div style="left:1670px;top:620px;width:1px;height:26px;background:#a9a9a9;"></div>
<svg style="left:1588px;top:627px;" width="16" height="13" viewBox="0 0 16 13"><path d="M2.2 3H13.8" stroke="#333" stroke-width="1.5"/><path d="M1.5 10.6L8 3.6L14.5 10.6z" fill="#333"/></svg>
<svg style="left:1618px;top:627px;" width="16" height="13" viewBox="0 0 16 13"><path d="M1.5 10.6L8 3.4L14.5 10.6z" fill="#333"/></svg>
<svg style="left:1648px;top:627px;" width="16" height="13" viewBox="0 0 16 13"><path d="M1.5 3.6L8 10.8L14.5 3.6z" fill="#333"/></svg>
<svg style="left:1678px;top:627px;" width="16" height="13" viewBox="0 0 16 13"><path d="M1.5 3.6L8 10.6L14.5 3.6z" fill="#333"/><path d="M2.2 11.2H13.8" stroke="#333" stroke-width="1.5"/></svg>
<!-- bottom panels -->
<div style="left:299px;top:651px;width:1402px;height:1px;background:repeating-linear-gradient(90deg,#cdcdcd 0 4px,transparent 4px 6px);"></div>
<div style="left:765px;top:655px;width:1px;height:342px;background:repeating-linear-gradient(180deg,#d2d2d2 0 4px,transparent 4px 6px);"></div>
<div style="left:1236px;top:655px;width:1px;height:342px;background:repeating-linear-gradient(180deg,#d2d2d2 0 4px,transparent 4px 6px);"></div>
<span class="t" style="left:299px;top:655.5px;font-size:16px;line-height:22px;font-weight:bold;color:#00924a;transform-origin:0 50%;transform:scaleX(1.1916);">Сметы ремонта (заявки на ремонт)</span>
<div style="left:299px;top:673px;width:331px;height:1px;background:#0a9550;"></div>
<div class="btn" style="left:299px;top:679px;width:136px;height:26px;"></div>
<span class="t" style="left:311.0px;top:682.5px;font-size:14px;line-height:18px;letter-spacing:0.25px;">Добавить заявку</span>
<div class="btn" style="left:702px;top:679px;width:58px;height:26px;"></div>
<span class="t" style="left:714.1px;top:683.2px;font-size:14px;line-height:18px;letter-spacing:-0.39px;">Еще</span>
<svg style="left:746px;top:691px;" width="10" height="6" viewBox="746 691 10 6"><path d="M748.0 692.6H753.8L750.9 695.4z" fill="#4a4a4a"/></svg>
<div class="grid" style="left:299px;top:714px;width:461px;height:279px;"></div>
<div style="left:300px;top:715px;width:459px;height:23px;background:#f1f1f1;box-shadow:inset 0 0 0 1px #fff;"></div>
<div style="left:300px;top:738px;width:459px;height:1px;background:#cacaca;"></div>
<svg style="left:309px;top:972px;" width="10" height="12" viewBox="0 0 10 12"><path d="M7 3V9L2.6 6z" fill="#c9c9c9"/></svg>
<svg style="left:602px;top:972px;" width="10" height="12" viewBox="0 0 10 12"><path d="M3 3V9L7.4 6z" fill="#c9c9c9"/></svg>
<div style="left:639px;top:966px;width:120px;height:26px;border-left:1px solid #adadad;border-top:1px solid #adadad;background:#fff;"></div>
<div style="left:669px;top:966px;width:1px;height:26px;background:#adadad;"></div>
<div style="left:699px;top:966px;width:1px;height:26px;background:#adadad;"></div>
<div style="left:729px;top:966px;width:1px;height:26px;background:#adadad;"></div>
<svg style="left:647px;top:973px;" width="16" height="13" viewBox="0 0 16 13"><path d="M2.2 3H13.8" stroke="#b2b2b2" stroke-width="1.5"/><path d="M1.5 10.6L8 3.6L14.5 10.6z" fill="#b2b2b2"/></svg>
<svg style="left:677px;top:973px;" width="16" height="13" viewBox="0 0 16 13"><path d="M1.5 10.6L8 3.4L14.5 10.6z" fill="#b2b2b2"/></svg>
<svg style="left:707px;top:973px;" width="16" height="13" viewBox="0 0 16 13"><path d="M1.5 3.6L8 10.8L14.5 3.6z" fill="#b2b2b2"/></svg>
<svg style="left:737px;top:973px;" width="16" height="13" viewBox="0 0 16 13"><path d="M1.5 3.6L8 10.6L14.5 3.6z" fill="#b2b2b2"/><path d="M2.2 11.2H13.8" stroke="#b2b2b2" stroke-width="1.5"/></svg>
<span class="t" style="left:305.0px;top:716.9px;font-size:14px;line-height:18px;letter-spacing:0.24px;color:#444;">Документ заявка</span>
<span class="t" style="left:576.0px;top:716.9px;font-size:14px;line-height:18px;letter-spacing:0.29px;color:#444;">Статус</span>
<div style="left:569px;top:715px;width:3px;height:23px;background:#fff;"></div>
<div style="left:570px;top:715px;width:1px;height:24px;background:#c2c2c2;"></div>
<span class="t" style="left:770px;top:655.5px;font-size:16px;line-height:22px;font-weight:bold;color:#00924a;transform-origin:0 50%;transform:scaleX(1.1754);">Наряды на ремонт</span>
<div style="left:770px;top:673px;width:174px;height:1px;background:#0a9550;"></div>
<div class="btn" style="left:770px;top:679px;width:129px;height:26px;"></div>
<span class="t" style="left:782.0px;top:682.5px;font-size:14px;line-height:18px;letter-spacing:0.03px;">Добавить наряд</span>
<div class="btn" style="left:1173px;top:679px;width:58px;height:26px;"></div>
<span class="t" style="left:1185.1px;top:683.2px;font-size:14px;line-height:18px;letter-spacing:-0.39px;">Еще</span>
<svg style="left:1217px;top:691px;" width="10" height="6" viewBox="1217 691 10 6"><path d="M1219.0 692.6H1224.8L1221.9 695.4z" fill="#4a4a4a"/></svg>
<div class="grid" style="left:770px;top:714px;width:461px;height:279px;"></div>
<div style="left:771px;top:715px;width:459px;height:23px;background:#f1f1f1;box-shadow:inset 0 0 0 1px #fff;"></div>
<div style="left:771px;top:738px;width:459px;height:1px;background:#cacaca;"></div>
<svg style="left:780px;top:972px;" width="10" height="12" viewBox="0 0 10 12"><path d="M7 3V9L2.6 6z" fill="#c9c9c9"/></svg>
<svg style="left:1073px;top:972px;" width="10" height="12" viewBox="0 0 10 12"><path d="M3 3V9L7.4 6z" fill="#c9c9c9"/></svg>
<div style="left:1110px;top:966px;width:120px;height:26px;border-left:1px solid #adadad;border-top:1px solid #adadad;background:#fff;"></div>
<div style="left:1140px;top:966px;width:1px;height:26px;background:#adadad;"></div>
<div style="left:1170px;top:966px;width:1px;height:26px;background:#adadad;"></div>
<div style="left:1200px;top:966px;width:1px;height:26px;background:#adadad;"></div>
<svg style="left:1118px;top:973px;" width="16" height="13" viewBox="0 0 16 13"><path d="M2.2 3H13.8" stroke="#b2b2b2" stroke-width="1.5"/><path d="M1.5 10.6L8 3.6L14.5 10.6z" fill="#b2b2b2"/></svg>
<svg style="left:1148px;top:973px;" width="16" height="13" viewBox="0 0 16 13"><path d="M1.5 10.6L8 3.4L14.5 10.6z" fill="#b2b2b2"/></svg>
<svg style="left:1178px;top:973px;" width="16" height="13" viewBox="0 0 16 13"><path d="M1.5 3.6L8 10.8L14.5 3.6z" fill="#b2b2b2"/></svg>
<svg style="left:1208px;top:973px;" width="16" height="13" viewBox="0 0 16 13"><path d="M1.5 3.6L8 10.6L14.5 3.6z" fill="#b2b2b2"/><path d="M2.2 11.2H13.8" stroke="#b2b2b2" stroke-width="1.5"/></svg>
<span class="t" style="left:776.0px;top:716.9px;font-size:14px;line-height:18px;letter-spacing:0.08px;color:#444;">Документ наряд</span>
<svg style="left:1209px;top:718px;" width="12" height="14" viewBox="1209 718 12 14"><path d="M1215.2 720.4V728" stroke="#3a3a3a" stroke-width="1.2"/><path d="M1212.7 726.1L1215.2 729.9L1217.7 726.1Q1215.2 727.3 1212.7 726.1z" fill="#3a3a3a"/></svg>
<span class="t" style="left:1241px;top:655.5px;font-size:16px;line-height:22px;font-weight:bold;color:#00924a;transform-origin:0 50%;transform:scaleX(1.1572);">Акты по ремонту</span>
<div style="left:1241px;top:673px;width:158px;height:1px;background:#0a9550;"></div>
<div class="btn" style="left:1241px;top:679px;width:112px;height:26px;"></div>
<span class="t" style="left:1253.0px;top:682.5px;font-size:14px;line-height:18px;letter-spacing:0.15px;">Добавить акт</span>
<div class="btn" style="left:1643px;top:679px;width:58px;height:26px;"></div>
<span class="t" style="left:1655.1px;top:683.2px;font-size:14px;line-height:18px;letter-spacing:-0.39px;">Еще</span>
<svg style="left:1687px;top:691px;" width="10" height="6" viewBox="1687 691 10 6"><path d="M1689.0 692.6H1694.8L1691.9 695.4z" fill="#4a4a4a"/></svg>
<div class="grid" style="left:1241px;top:714px;width:460px;height:279px;"></div>
<div style="left:1242px;top:715px;width:458px;height:23px;background:#f1f1f1;box-shadow:inset 0 0 0 1px #fff;"></div>
<div style="left:1242px;top:738px;width:458px;height:1px;background:#cacaca;"></div>
<svg style="left:1251px;top:972px;" width="10" height="12" viewBox="0 0 10 12"><path d="M7 3V9L2.6 6z" fill="#c9c9c9"/></svg>
<svg style="left:1543px;top:972px;" width="10" height="12" viewBox="0 0 10 12"><path d="M3 3V9L7.4 6z" fill="#c9c9c9"/></svg>
<div style="left:1580px;top:966px;width:120px;height:26px;border-left:1px solid #adadad;border-top:1px solid #adadad;background:#fff;"></div>
<div style="left:1610px;top:966px;width:1px;height:26px;background:#adadad;"></div>
<div style="left:1640px;top:966px;width:1px;height:26px;background:#adadad;"></div>
<div style="left:1670px;top:966px;width:1px;height:26px;background:#adadad;"></div>
<svg style="left:1588px;top:973px;" width="16" height="13" viewBox="0 0 16 13"><path d="M2.2 3H13.8" stroke="#b2b2b2" stroke-width="1.5"/><path d="M1.5 10.6L8 3.6L14.5 10.6z" fill="#b2b2b2"/></svg>
<svg style="left:1618px;top:973px;" width="16" height="13" viewBox="0 0 16 13"><path d="M1.5 10.6L8 3.4L14.5 10.6z" fill="#b2b2b2"/></svg>
<svg style="left:1648px;top:973px;" width="16" height="13" viewBox="0 0 16 13"><path d="M1.5 3.6L8 10.8L14.5 3.6z" fill="#b2b2b2"/></svg>
<svg style="left:1678px;top:973px;" width="16" height="13" viewBox="0 0 16 13"><path d="M1.5 3.6L8 10.6L14.5 3.6z" fill="#b2b2b2"/><path d="M2.2 11.2H13.8" stroke="#b2b2b2" stroke-width="1.5"/></svg>
<span class="t" style="left:1247.8px;top:716.9px;font-size:14px;line-height:18px;letter-spacing:-0.18px;color:#444;">Завершенные</span>
<span class="t" style="left:1349.0px;top:716.9px;font-size:14px;line-height:18px;letter-spacing:0.21px;color:#444;">Документ акт</span>
<div style="left:1342px;top:715px;width:3px;height:23px;background:#fff;"></div>
<div style="left:1343px;top:715px;width:1px;height:24px;background:#c2c2c2;"></div>
<div style="left:1242px;top:739px;width:101px;height:21px;background:#fbdf85;"></div>
<div style="left:1344px;top:739px;width:356px;height:21px;background:#fdf1c9;"></div>
<svg style="left:1249px;top:740px;" width="17" height="15" viewBox="0 0 17 15"><path d="M1.8 8.2L5.8 12.6L14.6 1.6" fill="none" stroke="#1f9a3a" stroke-width="2.6"/></svg>
<svg style="left:1349px;top:740px;" width="20" height="20" viewBox="0 0 20 20"><rect x="1.8" y="2.6" width="13.4" height="15.6" rx="1.6" fill="#f4f4f4" stroke="#8d97a6" stroke-width="1.1"/><rect x="5" y="0.8" width="7" height="3.6" rx="1" fill="#f4d774" stroke="#b29434" stroke-width=".9"/><path d="M4.4 7.6H12.6M4.4 10.2H12.6M4.4 12.8H9" stroke="#9aa3b0" stroke-width="1"/><path d="M9.4 14.4L12.4 17.4L18.2 11.6" fill="none" stroke="#3fae49" stroke-width="2.6"/></svg>
<span class="t" style="left:1374.2px;top:741.1px;font-size:14px;line-height:18px;letter-spacing:-0.21px;color:#2f2f2f;">Акт о выполнении этапа работ РК-00000005 от 1<span class="el">...</span></span>
</div>
</body></html>
